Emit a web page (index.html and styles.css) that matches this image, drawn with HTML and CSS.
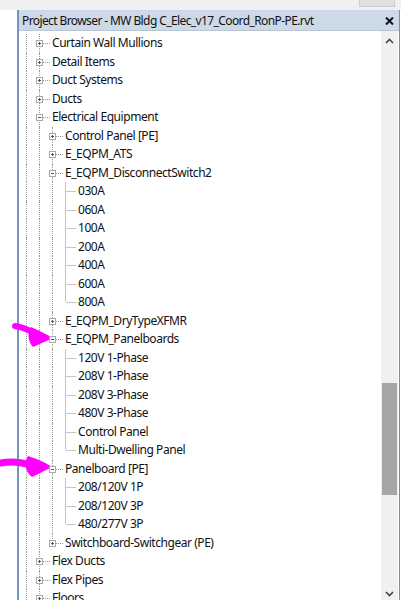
FILE: index.html
```html
<!DOCTYPE html>
<html>
<head>
<meta charset="utf-8">
<link rel="stylesheet" href="styles.css">
</head>
<body>
<div class="screen">
  <div class="topstrip"><div class="topbtn"></div></div>
  <div class="main">
    <div class="gutter"></div>
    <div class="panel">
      <div class="titlebar">
        <span class="title">Project Browser - MW Bldg C_Elec_v17_Coord_RonP-PE.rvt</span>
        <svg class="close" width="9" height="8" viewBox="0 0 9 8"><path d="M1 0.5 L8 7.5 M8 0.5 L1 7.5" stroke="#111" stroke-width="2"/></svg>
      </div>
      <div class="body">
        <div class="tree">
          <div class="row"><span class="g v"></span><span class="c"><i class="x plus"></i></span><span class="t">Curtain Wall Mullions</span></div>
          <div class="row"><span class="g v"></span><span class="c"><i class="x plus"></i></span><span class="t">Detail Items</span></div>
          <div class="row"><span class="g v"></span><span class="c"><i class="x plus"></i></span><span class="t">Duct Systems</span></div>
          <div class="row"><span class="g v"></span><span class="c"><i class="x plus"></i></span><span class="t">Ducts</span></div>
          <div class="row"><span class="g v"></span><span class="c"><i class="x minus"></i></span><span class="t">Electrical Equipment</span></div>
          <div class="row"><span class="g v"></span><span class="g v"></span><span class="c"><i class="x plus"></i></span><span class="t">Control Panel [PE]</span></div>
          <div class="row"><span class="g v"></span><span class="g v"></span><span class="c"><i class="x plus"></i></span><span class="t">E_EQPM_ATS</span></div>
          <div class="row"><span class="g v"></span><span class="g v"></span><span class="c"><i class="x minus"></i></span><span class="t">E_EQPM_DisconnectSwitch2</span></div>
          <div class="row"><span class="g v"></span><span class="g v"></span><span class="g v"></span><span class="c leaf"></span><span class="t">030A</span></div>
          <div class="row"><span class="g v"></span><span class="g v"></span><span class="g v"></span><span class="c leaf"></span><span class="t">060A</span></div>
          <div class="row"><span class="g v"></span><span class="g v"></span><span class="g v"></span><span class="c leaf"></span><span class="t">100A</span></div>
          <div class="row"><span class="g v"></span><span class="g v"></span><span class="g v"></span><span class="c leaf"></span><span class="t">200A</span></div>
          <div class="row"><span class="g v"></span><span class="g v"></span><span class="g v"></span><span class="c leaf"></span><span class="t">400A</span></div>
          <div class="row"><span class="g v"></span><span class="g v"></span><span class="g v"></span><span class="c leaf"></span><span class="t">600A</span></div>
          <div class="row"><span class="g v"></span><span class="g v"></span><span class="g v"></span><span class="c leaf last"></span><span class="t">800A</span></div>
          <div class="row"><span class="g v"></span><span class="g v"></span><span class="c"><i class="x plus"></i></span><span class="t">E_EQPM_DryTypeXFMR</span></div>
          <div class="row"><span class="g v"></span><span class="g v"></span><span class="c"><i class="x minus"></i></span><span class="t">E_EQPM_Panelboards</span></div>
          <div class="row"><span class="g v"></span><span class="g v"></span><span class="g v"></span><span class="c leaf"></span><span class="t">120V 1-Phase</span></div>
          <div class="row"><span class="g v"></span><span class="g v"></span><span class="g v"></span><span class="c leaf"></span><span class="t">208V 1-Phase</span></div>
          <div class="row"><span class="g v"></span><span class="g v"></span><span class="g v"></span><span class="c leaf"></span><span class="t">208V 3-Phase</span></div>
          <div class="row"><span class="g v"></span><span class="g v"></span><span class="g v"></span><span class="c leaf"></span><span class="t">480V 3-Phase</span></div>
          <div class="row"><span class="g v"></span><span class="g v"></span><span class="g v"></span><span class="c leaf"></span><span class="t">Control Panel</span></div>
          <div class="row"><span class="g v"></span><span class="g v"></span><span class="g v"></span><span class="c leaf last"></span><span class="t">Multi-Dwelling Panel</span></div>
          <div class="row"><span class="g v"></span><span class="g v"></span><span class="c"><i class="x minus"></i></span><span class="t">Panelboard [PE]</span></div>
          <div class="row"><span class="g v"></span><span class="g v"></span><span class="g v"></span><span class="c leaf"></span><span class="t">208/120V 1P</span></div>
          <div class="row"><span class="g v"></span><span class="g v"></span><span class="g v"></span><span class="c leaf"></span><span class="t">208/120V 3P</span></div>
          <div class="row"><span class="g v"></span><span class="g v"></span><span class="g v"></span><span class="c leaf last"></span><span class="t">480/277V 3P</span></div>
          <div class="row"><span class="g v"></span><span class="g v"></span><span class="c last"><i class="x plus"></i></span><span class="t">Switchboard-Switchgear (PE)</span></div>
          <div class="row"><span class="g v"></span><span class="c"><i class="x plus"></i></span><span class="t">Flex Ducts</span></div>
          <div class="row"><span class="g v"></span><span class="c"><i class="x plus"></i></span><span class="t">Flex Pipes</span></div>
          <div class="row"><span class="g v"></span><span class="c"><i class="x plus"></i></span><span class="t">Floors</span></div>
        </div>
        <div class="scrollbar">
          <svg class="arrow-up" width="9" height="6" viewBox="0 0 9 6"><path d="M1 5 L4.5 1.5 L8 5" fill="none" stroke="#444" stroke-width="1.6"/></svg>
          <div class="track"><div class="thumb"></div></div>
          <svg class="arrow-down" width="9" height="6" viewBox="0 0 9 6"><path d="M1 1 L4.5 4.5 L8 1" fill="none" stroke="#444" stroke-width="1.6"/></svg>
        </div>
      </div>
    </div>
  </div>
  <svg class="mark mark1" width="60" height="30" viewBox="0 0 60 30">
    <path d="M15 5 C22 6 29 9 36 13" fill="none" stroke="#ff00ff" stroke-width="6" stroke-linecap="round"/>
    <path d="M31 6 C38 9 46 13 53 17 L33 26 C28 21 27 12 31 6 Z" fill="#ff00ff"/>
  </svg>
  <svg class="mark mark2" width="60" height="30" viewBox="0 0 60 30">
    <path d="M1 10 C10 8 22 9 34 13" fill="none" stroke="#ff00ff" stroke-width="7" stroke-linecap="round"/>
    <path d="M28 3 C40 7 46 10 52 14 L32 24 C25 19 24 9 28 3 Z" fill="#ff00ff"/>
  </svg>
</div>
</body>
</html>
```
FILE: styles.css
```css
html, body {
  margin: 0;
  padding: 0;
  background: #ffffff;
}
.screen {
  position: relative;
  width: 401px;
  height: 600px;
  overflow: hidden;
  background: #ffffff;
  font-family: "Noto Sans", "Open Sans", sans-serif;
  font-size: 12px;
  letter-spacing: -0.45px;
  color: #111;
}
.topstrip {
  height: 10px;
  background: #f0f0f0;
  position: relative;
}
.topbtn {
  position: absolute;
  right: 6px;
  top: -2px;
  width: 34px;
  height: 7px;
  background: #e1e1e1;
  border: 1px solid #cfcfcf;
}
.main {
  display: flex;
  height: 590px;
}
.gutter {
  width: 17px;
  background: #ffffff;
}
.panel {
  width: 380px;
  border-left: 2px solid #7394c0;
  border-right: 1px solid #8a8a8a;
  display: flex;
  flex-direction: column;
}
.titlebar {
  height: 20px;
  background: #ccd9e7;
  border-bottom: 1px solid #b8c4d0;
  display: flex;
  align-items: center;
  justify-content: space-between;
  padding: 0 5px 0 3px;
}
.title {
  white-space: nowrap;
  font-size: 12px;
  letter-spacing: -0.6px;
}
.close {
  display: block;
  margin-top: 1px;
}
.body {
  flex: 1;
  display: flex;
  min-height: 0;
}
.tree {
  flex: 1;
  padding-top: 3px;
  padding-left: 1px;
}
.row {
  display: flex;
  height: 18.5px;
  line-height: 18.5px;
  white-space: nowrap;
}
.g, .c {
  position: relative;
  width: 13px;
  flex: none;
}
.g.v::before, .c::before {
  content: "";
  position: absolute;
  left: 6px;
  top: 0;
  bottom: 0;
  border-left: 1px dotted #9a9a9a;
}
.c.last::before {
  bottom: 50%;
}
.c::after {
  content: "";
  position: absolute;
  left: 7px;
  width: 10px;
  top: 9px;
  border-top: 1px dotted #9a9a9a;
}
.c.leaf::before {
  border-left: 1px solid #c4c4c4;
}
.c.leaf::after {
  border-top: 1px solid #c4c4c4;
}
.t {
  padding-left: 6px;
}
.x {
  position: absolute;
  left: 3px;
  top: 6px;
  width: 5px;
  height: 5px;
  border: 1px solid #a8a8a8;
  background: #fff;
  z-index: 1;
}
.x::before {
  content: "";
  position: absolute;
  left: 1px;
  top: 2px;
  width: 3px;
  height: 1px;
  background: #555;
}
.x.plus::after {
  content: "";
  position: absolute;
  left: 2px;
  top: 1px;
  width: 1px;
  height: 3px;
  background: #555;
}
.scrollbar {
  width: 17px;
  background: #f0f0f0;
  display: flex;
  flex-direction: column;
  align-items: center;
  margin-right: 1px;
}
.arrow-up {
  margin-top: 7px;
  display: block;
}
.track {
  flex: 1;
  width: 100%;
  position: relative;
}
.thumb {
  position: absolute;
  left: 1px;
  right: 1px;
  top: 339px;
  height: 112px;
  background: #a6a6a6;
}
.arrow-down {
  margin-bottom: 3px;
  display: block;
}
.mark {
  position: absolute;
}
.mark1 {
  left: 0;
  top: 321px;
}
.mark2 {
  left: 0;
  top: 453px;
}
```
